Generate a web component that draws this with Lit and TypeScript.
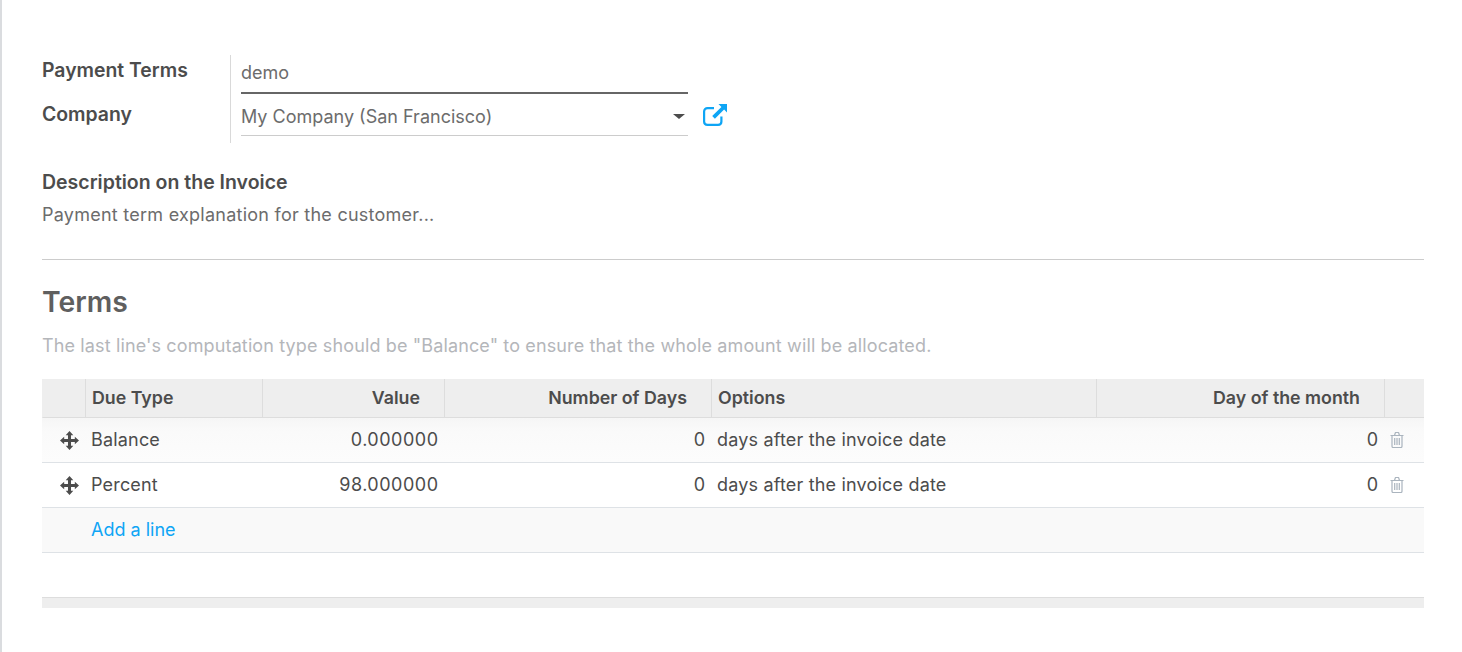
import { LitElement, html, css, svg } from 'lit';
import { customElement } from 'lit/decorators.js';

const moveIcon = svg`<svg class="move" viewBox="0 0 20 20"><path fill="#4c4c4c" d="M10 0l4 4.400h-2.400v4h4V6L20 10l-4.400 4v-2.400h-4v4H14L10 20l-4-4.400h2.400v-4h-4V14L0 10l4.400-4v2.400h4v-4H6z"/></svg>`;

const trashIcon = svg`<svg class="trash" viewBox="0 0 14 16"><path fill="none" stroke="#aab4be" stroke-width="1.200" d="M.5 3.500h13M2 3.500v10.700c0 .8.5 1.300 1.200 1.300h7.600c.7 0 1.200-.5 1.200-1.300V3.500M4.500 3.500L5.300 1c.1-.3.300-.5.6-.5h2.200c.3 0 .5.200.6.500l.8 2.500M4.700 6v7M7 6v7M9.300 6v7"/></svg>`;

const linkIcon = svg`<svg class="ext" viewBox="0 0 24 22"><path fill="none" stroke="#0ea5f5" stroke-width="2.200" d="M11 4.100H4.500C2.600 4.100 1.100 5.600 1.100 7.500v10.100c0 1.900 1.500 3.300 3.400 3.300h10.600c1.900 0 3.300-1.400 3.300-3.300v-5"/><path fill="#0ea5f5" d="M15.500 0H24v8.500l-2.900-2.900-9.200 9.200-2.700-2.700 9.200-9.200z"/></svg>`;

interface TermLine {
  type: string;
  value: string;
  days: string;
  dayOfMonth: string;
}

const LINES: TermLine[] = [
  { type: 'Balance', value: '0.000000', days: '0', dayOfMonth: '0' },
  { type: 'Percent', value: '98.000000', days: '0', dayOfMonth: '0' },
];

@customElement('app-root')
export class AppRoot extends LitElement {
  static styles = css`
    :host {
      display: block;
      height: 652px;
      box-sizing: border-box;
      background: #fff;
      border-left: 2px solid #dadcdf;
      padding: 55px 38px 0 40px;
      font-family: Inter, "Liberation Sans", sans-serif;
      font-size: 18px;
      color: #4c4c4c;
      overflow: hidden;
    }

    .top {
      display: flex;
      height: 88px;
    }

    .labels {
      width: 188px;
      border-right: 1px solid #d9d9d9;
      font-size: 19.4px;
      font-weight: 600;
      color: #4c4c4c;
    }

    .labels div {
      height: 44px;
      line-height: 30px;
    }

    .fields {
      width: 447px;
      margin-left: 10px;
      color: #6c6c6c;
    }

    .name {
      box-sizing: border-box;
      height: 39px;
      line-height: 36px;
      border-bottom: 2px solid #666;
    }

    .company {
      box-sizing: border-box;
      height: 42px;
      padding-top: 4px;
      border-bottom: 1px solid #ccc;
      display: flex;
      justify-content: space-between;
      align-items: center;
    }

    .caret {
      width: 0;
      height: 0;
      border-left: 6px solid transparent;
      border-right: 6px solid transparent;
      border-top: 5px solid #4c4c4c;
      margin-right: 3px;
    }

    .ext {
      width: 24px;
      height: 22px;
      margin: 49px 0 0 15px;
    }

    .desc {
      margin-top: 24px;
      padding-bottom: 29px;
      border-bottom: 1px solid #ccc;
    }

    .desc-label {
      font-size: 19.5px;
      font-weight: 600;
      line-height: 30px;
    }

    .desc-text {
      line-height: 30px;
      margin-top: 3px;
      color: #6c6c6c;
      letter-spacing: 0.25px;
    }

    h2 {
      margin: 24px 0 0;
      font-size: 28.3px;
      font-weight: 600;
      line-height: 36px;
      color: #5f5f5f;
    }

    .hint {
      margin-top: 11px;
      line-height: 30px;
      color: #b4b6ba;
      letter-spacing: 0.13px;
    }

    table {
      margin-top: 18px;
      width: 1382px;
      table-layout: fixed;
      border-collapse: separate;
      border-spacing: 0;
    }

    th {
      height: 39px;
      box-sizing: border-box;
      padding: 0 24px 2px 6px;
      background: #eee;
      border-left: 1px solid #ddd;
      border-bottom: 1px solid #ddd;
      font-size: 17.8px;
      font-weight: 600;
      text-align: left;
      color: #4c4c4c;
    }

    th:first-child {
      border-left: 1px solid #eee;
    }

    td {
      height: 45px;
      box-sizing: border-box;
      padding: 0 6px 2px;
      border-bottom: 1px solid #dee2e6;
      letter-spacing: 0.18px;
    }

    .num {
      text-align: right;
    }

    td.num {
      padding-right: 5.500px;
      letter-spacing: 0.5px;
    }

    .first td {
      background: linear-gradient(#f6f6f6, #fafafa 30%, #fcfcfc);
    }

    td.handle {
      padding: 0 0 0 18px;
    }

    .move {
      width: 19px;
      height: 19px;
      display: block;
    }

    .trash {
      width: 14px;
      height: 16px;
      display: block;
    }

    td.del {
      padding: 0 0 0 6px;
    }

    .add td {
      background: #f9f9f9;
      letter-spacing: 0;
    }

    .add a {
      color: #0ea5f5;
      text-decoration: none;
    }

    .foot {
      margin-top: 44px;
      height: 10px;
      background: #eee;
      border-top: 1px solid #ddd;
    }
  `;

  render() {
    return html`
      <div class="top">
        <div class="labels">
          <div>Payment Terms</div>
          <div>Company</div>
        </div>
        <div class="fields">
          <div class="name">demo</div>
          <div class="company">
            <span>My Company (San Francisco)</span>
            <span class="caret"></span>
          </div>
        </div>
        ${linkIcon}
      </div>
      <div class="desc">
        <div class="desc-label">Description on the Invoice</div>
        <div class="desc-text">Payment term explanation for the customer...</div>
      </div>
      <h2>Terms</h2>
      <div class="hint">The last line's computation type should be "Balance" to ensure that the whole amount will be allocated.</div>
      <table>
        <colgroup>
          <col style="width:43px" />
          <col style="width:177px" />
          <col style="width:182px" />
          <col style="width:267px" />
          <col style="width:385px" />
          <col style="width:288px" />
          <col style="width:40px" />
        </colgroup>
        <thead>
          <tr>
            <th></th>
            <th>Due Type</th>
            <th class="num">Value</th>
            <th class="num">Number of Days</th>
            <th>Options</th>
            <th class="num">Day of the month</th>
            <th></th>
          </tr>
        </thead>
        <tbody>
          ${LINES.map(
            (line, i) => html`
              <tr class=${i === 0 ? 'first' : ''}>
                <td class="handle">${moveIcon}</td>
                <td>${line.type}</td>
                <td class="num">${line.value}</td>
                <td class="num">${line.days}</td>
                <td>days after the invoice date</td>
                <td class="num">${line.dayOfMonth}</td>
                <td class="del">${trashIcon}</td>
              </tr>
            `,
          )}
          <tr class="add">
            <td></td>
            <td colspan="6"><a href="#">Add a line</a></td>
          </tr>
        </tbody>
      </table>
      <div class="foot"></div>
    `;
  }
}
